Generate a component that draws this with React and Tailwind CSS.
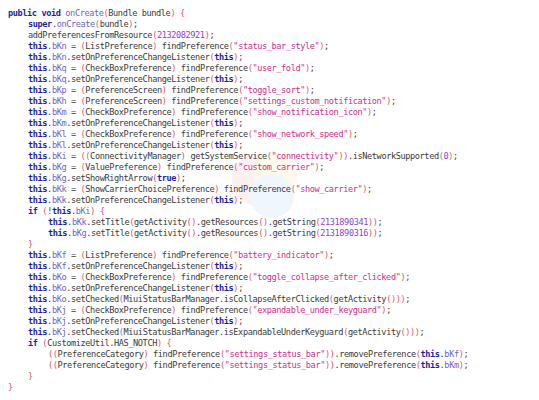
import React from 'react';

// source listing, indent level + text
const lines = [
  [0, 'public void onCreate(Bundle bundle) {'],
  [1, 'super.onCreate(bundle);'],
  [1, 'addPreferencesFromResource(2132082921);'],
  [1, 'this.bKn = (ListPreference) findPreference("status_bar_style");'],
  [1, 'this.bKn.setOnPreferenceChangeListener(this);'],
  [1, 'this.bKq = (CheckBoxPreference) findPreference("user_fold");'],
  [1, 'this.bKq.setOnPreferenceChangeListener(this);'],
  [1, 'this.bKp = (PreferenceScreen) findPreference("toggle_sort");'],
  [1, 'this.bKh = (PreferenceScreen) findPreference("settings_custom_notification");'],
  [1, 'this.bKm = (CheckBoxPreference) findPreference("show_notification_icon");'],
  [1, 'this.bKm.setOnPreferenceChangeListener(this);'],
  [1, 'this.bKl = (CheckBoxPreference) findPreference("show_network_speed");'],
  [1, 'this.bKl.setOnPreferenceChangeListener(this);'],
  [1, 'this.bKi = ((ConnectivityManager) getSystemService("connectivity")).isNetworkSupported(0);'],
  [1, 'this.bKg = (ValuePreference) findPreference("custom_carrier");'],
  [1, 'this.bKg.setShowRightArrow(true);'],
  [1, 'this.bKk = (ShowCarrierChoicePreference) findPreference("show_carrier");'],
  [1, 'this.bKk.setOnPreferenceChangeListener(this);'],
  [1, 'if (!this.bKi) {'],
  [2, 'this.bKk.setTitle(getActivity().getResources().getString(2131890341));'],
  [2, 'this.bKg.setTitle(getActivity().getResources().getString(2131890316));'],
  [1, '}'],
  [1, 'this.bKf = (ListPreference) findPreference("battery_indicator");'],
  [1, 'this.bKf.setOnPreferenceChangeListener(this);'],
  [1, 'this.bKo = (CheckBoxPreference) findPreference("toggle_collapse_after_clicked");'],
  [1, 'this.bKo.setOnPreferenceChangeListener(this);'],
  [1, 'this.bKo.setChecked(MiuiStatusBarManager.isCollapseAfterClicked(getActivity()));'],
  [1, 'this.bKj = (CheckBoxPreference) findPreference("expandable_under_keyguard");'],
  [1, 'this.bKj.setOnPreferenceChangeListener(this);'],
  [1, 'this.bKj.setChecked(MiuiStatusBarManager.isExpandableUnderKeyguard(getActivity()));'],
  [1, 'if (CustomizeUtil.HAS_NOTCH) {'],
  [2, '((PreferenceCategory) findPreference("settings_status_bar")).removePreference(this.bKf);'],
  [2, '((PreferenceCategory) findPreference("settings_status_bar")).removePreference(this.bKm);'],
  [1, '}'],
  [0, '}'],
];

const styles = {
  kw: 'font-bold text-[#1f1f9a]',
  member: 'text-[#6f63c2]',
  str: 'text-[#cf2f8c]',
  num: 'text-[#8b45cc]',
  paren: 'text-[#e0566a]',
  plain: 'text-[#3a3a3a]',
};

const tokenRe = /("[^"]*")|(\b\d+\b)|(\b(?:public|void|super|this|true|if)\b)|([(){}])|(bK\w+|onCreate)|([^"(){}\w]+|\w+)/g;

function tokenize(src) {
  const out = [];
  let m;
  tokenRe.lastIndex = 0;
  while ((m = tokenRe.exec(src))) {
    let type = 'plain';
    if (m[1]) type = 'str';
    else if (m[2]) type = 'num';
    else if (m[3]) type = 'kw';
    else if (m[4]) type = 'paren';
    else if (m[5]) type = 'member';
    out.push([type, m[0]]);
  }
  return out;
}

const indents = ['pl-0', 'pl-[20px]', 'pl-[40px]'];

const App = () => {
  return (
    <div className="w-[539px] h-[400px] bg-white relative overflow-hidden">
      {/* faint watermark behind the code */}
      <svg className="absolute left-[228px] top-[140px] opacity-[0.07]" width="80" height="90" viewBox="0 0 80 90">
        <circle cx="30" cy="40" r="26" fill="#e74c3c" />
        <circle cx="48" cy="34" r="22" fill="#f1c40f" />
        <circle cx="44" cy="56" r="22" fill="#3498db" />
      </svg>

      <pre className="relative pt-[8px] pl-[8px] font-['DejaVu_Sans_Mono','Liberation_Mono',monospace] text-[8.6px] tracking-[-0.4px] leading-[11px] text-[#3a3a3a]">
        {lines.map(([lvl, src], i) => (
          <div key={i} className={`whitespace-pre ${indents[lvl]}`}>
            {tokenize(src).map(([t, s], j) => (
              <span key={j} className={styles[t]}>{s}</span>
            ))}
          </div>
        ))}
      </pre>
    </div>
  );
};

export default App;
